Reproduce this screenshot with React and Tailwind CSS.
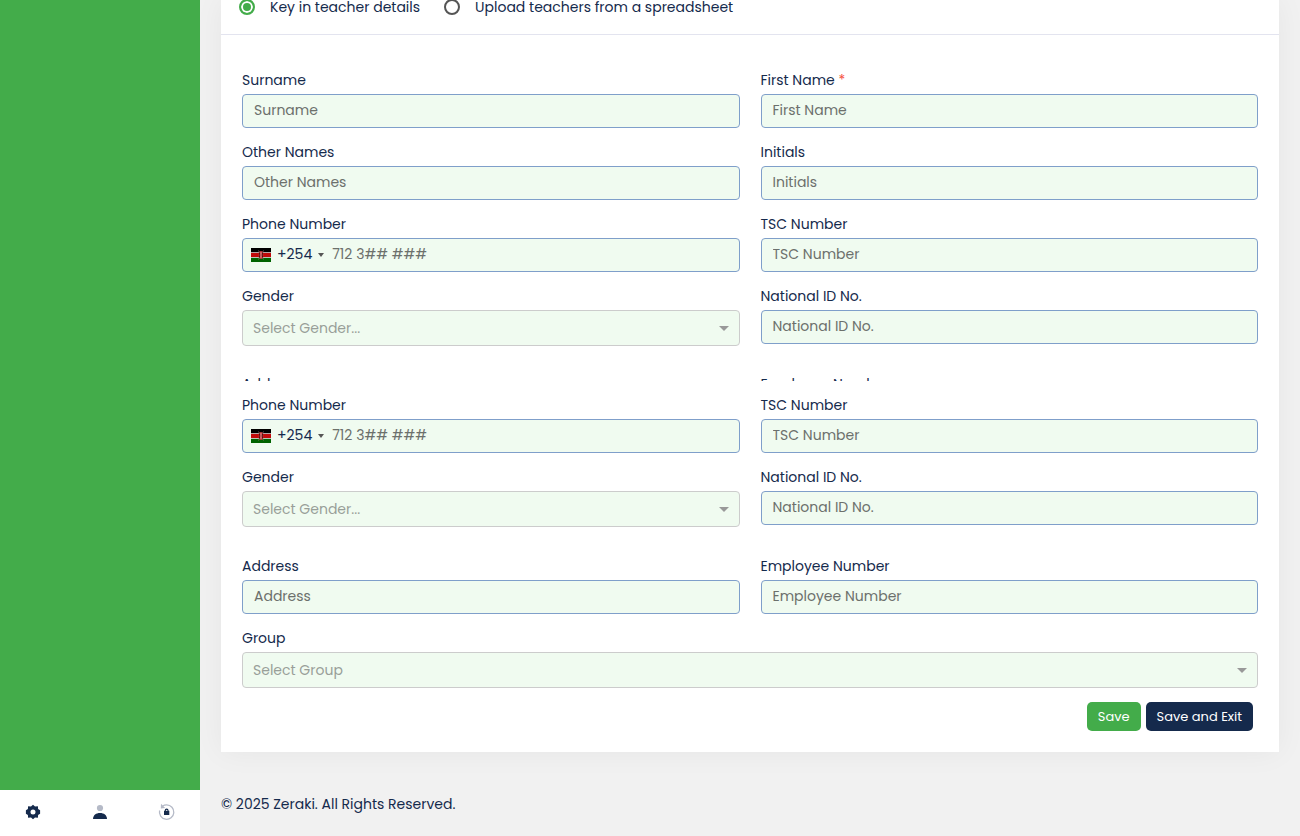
import { useId } from "react";

const inputClass =
  "h-[34px] w-full rounded border border-[#7f9fca] bg-[#f0fbf0] px-[11px] pb-0.5 text-sm text-[#152a4c] outline-none placeholder:text-[#6c706c]";

function Label({ htmlFor, children }) {
  return (
    <label htmlFor={htmlFor} className="self-start whitespace-nowrap leading-5">
      {children}
    </label>
  );
}

function Field({ label, required }) {
  const id = useId();
  return (
    <div className="flex flex-col gap-1">
      <Label htmlFor={id}>
        {label}
        {required && <span className="text-[#f5503d]"> *</span>}
      </Label>
      <input id={id} type="text" placeholder={label} className={inputClass} />
    </div>
  );
}

function SelectField({ label, placeholder }) {
  const id = useId();
  return (
    <div className="flex flex-col gap-1">
      <Label htmlFor={id}>{label}</Label>
      <div className="grid items-center">
        <select
          id={id}
          defaultValue=""
          className="col-start-1 row-start-1 h-9 w-full appearance-none rounded border border-[#cccccc] bg-[#f0fbf0] px-2.5 text-sm text-[#999f99] outline-none"
        >
          <option value="">{placeholder}</option>
        </select>
        <svg
          viewBox="0 0 10 5"
          className="pointer-events-none col-start-1 row-start-1 mr-[11px] h-[5px] w-2.5 justify-self-end"
          aria-hidden="true"
        >
          <path d="M0 0h10L5 5z" fill="#999999" />
        </svg>
      </div>
    </div>
  );
}

function KenyaFlag() {
  return (
    <svg viewBox="0 0 20 14" className="h-3.5 w-5" aria-hidden="true">
      <rect width="20" height="14" fill="#fff" />
      <rect width="20" height="4" fill="#000" />
      <rect y="4" width="20" height="1" fill="#b9a5a5" />
      <rect y="5" width="20" height="4" fill="#c00a0a" />
      <rect y="9" width="20" height="1" fill="#b9c5b9" />
      <rect y="10" width="20" height="4" fill="#006300" />
      <path d="M7.5 2.5l5 9M12.500 2.500l-5 9" stroke="#9d7777" strokeWidth="0.7" />
      <ellipse cx="10" cy="7" rx="2.300" ry="4" fill="#c23a3c" />
      <path d="M8.300 4.500q1.200 2.500 0 5M11.700 4.500q-1.200 2.500 0 5" stroke="#290000" strokeWidth="0.8" fill="none" />
      <path d="M10 4v6" stroke="#e5a0a0" strokeWidth="0.8" />
    </svg>
  );
}

function PhoneField() {
  const id = useId();
  return (
    <div className="flex flex-col gap-1">
      <Label htmlFor={id}>Phone Number</Label>
      <div className="flex h-[34px] items-center rounded border border-[#7f9fca] bg-[#f0fbf0] pl-2">
        <button type="button" aria-label="Country code +254" className="flex items-center gap-1.5">
          <KenyaFlag />
          <span className="pb-0.5">+254</span>
          <svg viewBox="0 0 6 4" className="h-1 w-1.5" aria-hidden="true">
            <path d="M0 0h6L3 4z" fill="#555555" />
          </svg>
        </button>
        <input
          id={id}
          type="tel"
          placeholder="712 3## ###"
          className="h-full min-w-0 flex-1 bg-transparent px-2 pb-0.5 outline-none placeholder:text-[#6c706c]"
        />
      </div>
    </div>
  );
}

function Row({ children }) {
  return <div className="grid grid-cols-2 gap-x-[21px]">{children}</div>;
}

function ContactRows() {
  return (
    <>
      <Row>
        <PhoneField />
        <Field label="TSC Number" />
      </Row>
      <Row>
        <SelectField label="Gender" placeholder="Select Gender..." />
        <Field label="National ID No." />
      </Row>
    </>
  );
}

function AddressRow() {
  return (
    <Row>
      <Field label="Address" />
      <Field label="Employee Number" />
    </Row>
  );
}

function ModeOption({ children, defaultChecked }) {
  return (
    <label className="flex items-center gap-[15px] whitespace-nowrap">
      <input
        type="radio"
        name="mode"
        defaultChecked={defaultChecked}
        className="size-4 appearance-none rounded-full border-2 border-[#555555] bg-white checked:border-[#43ac4a] checked:bg-[#43ac4a] checked:inset-ring-2 checked:inset-ring-white"
      />
      {children}
    </label>
  );
}

function GearIcon() {
  return (
    <svg viewBox="0 0 16 16" className="size-4" aria-hidden="true">
      <path
        fill="#152a4c"
        fillRule="evenodd"
        d="M8 .8l2 1.800 2.900-.3.200 2.700 2 1.200v3.600l-2 1.200-.2 2.700-2.900-.3-2 1.800-2-1.800-2.900.3-.2-2.700-2-1.200V6.200l2-1.200.2-2.700 2.900.3zM8 5.500a2.500 2.500 0 100 5 2.500 2.500 0 000-5z"
      />
    </svg>
  );
}

function PersonIcon() {
  return (
    <svg viewBox="0 0 16 16" className="size-4" aria-hidden="true">
      <circle cx="8" cy="4" r="3.100" fill="#b5bac7" />
      <path d="M1 15c.2-4 3-6 7-6s6.800 2 7 6z" fill="#152a4c" />
    </svg>
  );
}

function LockResetIcon() {
  return (
    <svg viewBox="0 0 18 18" className="size-[18px]" aria-hidden="true">
      <path d="M1.600 7.500A7.200 7.200 0 108.700 1.900q-2.500 0-4.300 1.300" fill="none" stroke="#b5bac7" strokeWidth="1.300" />
      <path d="M3 .8l-.2 4.600 4.400-.4z" fill="#b5bac7" />
      <path d="M6 7.800h5.300V12H6z" fill="#152a4c" />
      <path d="M7.300 8.500V7.500a1.350 1.350 0 012.700 0v1" fill="none" stroke="#152a4c" strokeWidth="1.100" />
    </svg>
  );
}

export default function App() {
  return (
    <div className="flex min-h-screen overflow-hidden bg-[#f1f1f1] font-['Poppins','Inter',sans-serif] text-sm leading-5 text-[#152a4c]">
      <aside className="flex w-[200px] shrink-0 flex-col bg-[#43ac4a]">
        <nav className="mt-auto grid h-[46px] grid-cols-3 place-items-center bg-white pb-0.5">
          <button type="button" aria-label="Settings">
            <GearIcon />
          </button>
          <button type="button" aria-label="Profile">
            <PersonIcon />
          </button>
          <button type="button" aria-label="Reset password">
            <LockResetIcon />
          </button>
        </nav>
      </aside>

      <main className="min-w-0 flex-1 px-[21px]">
        <form className="bg-white shadow-[0_0_28px_rgba(0,0,0,0.05)]">
          <div className="flex h-[35px] gap-6 border-b border-[#e3e4ef] px-[18px] pb-5">
            <ModeOption defaultChecked>Key in teacher details</ModeOption>
            <ModeOption>Upload teachers from a spreadsheet</ModeOption>
          </div>

          <div className="flex flex-col gap-3.5 px-[21px] pt-[35px] pb-[21px]">
            <Row>
              <Field label="Surname" />
              <Field label="First Name" required />
            </Row>
            <Row>
              <Field label="Other Names" />
              <Field label="Initials" />
            </Row>
            <ContactRows />
            <div className="mt-3.5 h-[7px] overflow-hidden">
              <AddressRow />
            </div>
            <ContactRows />
            <div className="mt-[15px]">
              <AddressRow />
            </div>
            <SelectField label="Group" placeholder="Select Group" />
            <div className="flex justify-end gap-[5px] pr-[5px] text-[13px]">
              <button type="button" className="h-[29px] rounded-[5px] bg-[#43ac4a] px-[11px] text-white">
                Save
              </button>
              <button type="submit" className="h-[29px] rounded-[5px] bg-[#152a4c] px-[11px] text-white">
                Save and Exit
              </button>
            </div>
          </div>
        </form>

        <footer className="pt-[42px] pb-5">© 2025 Zeraki. All Rights Reserved.</footer>
      </main>
    </div>
  );
}
